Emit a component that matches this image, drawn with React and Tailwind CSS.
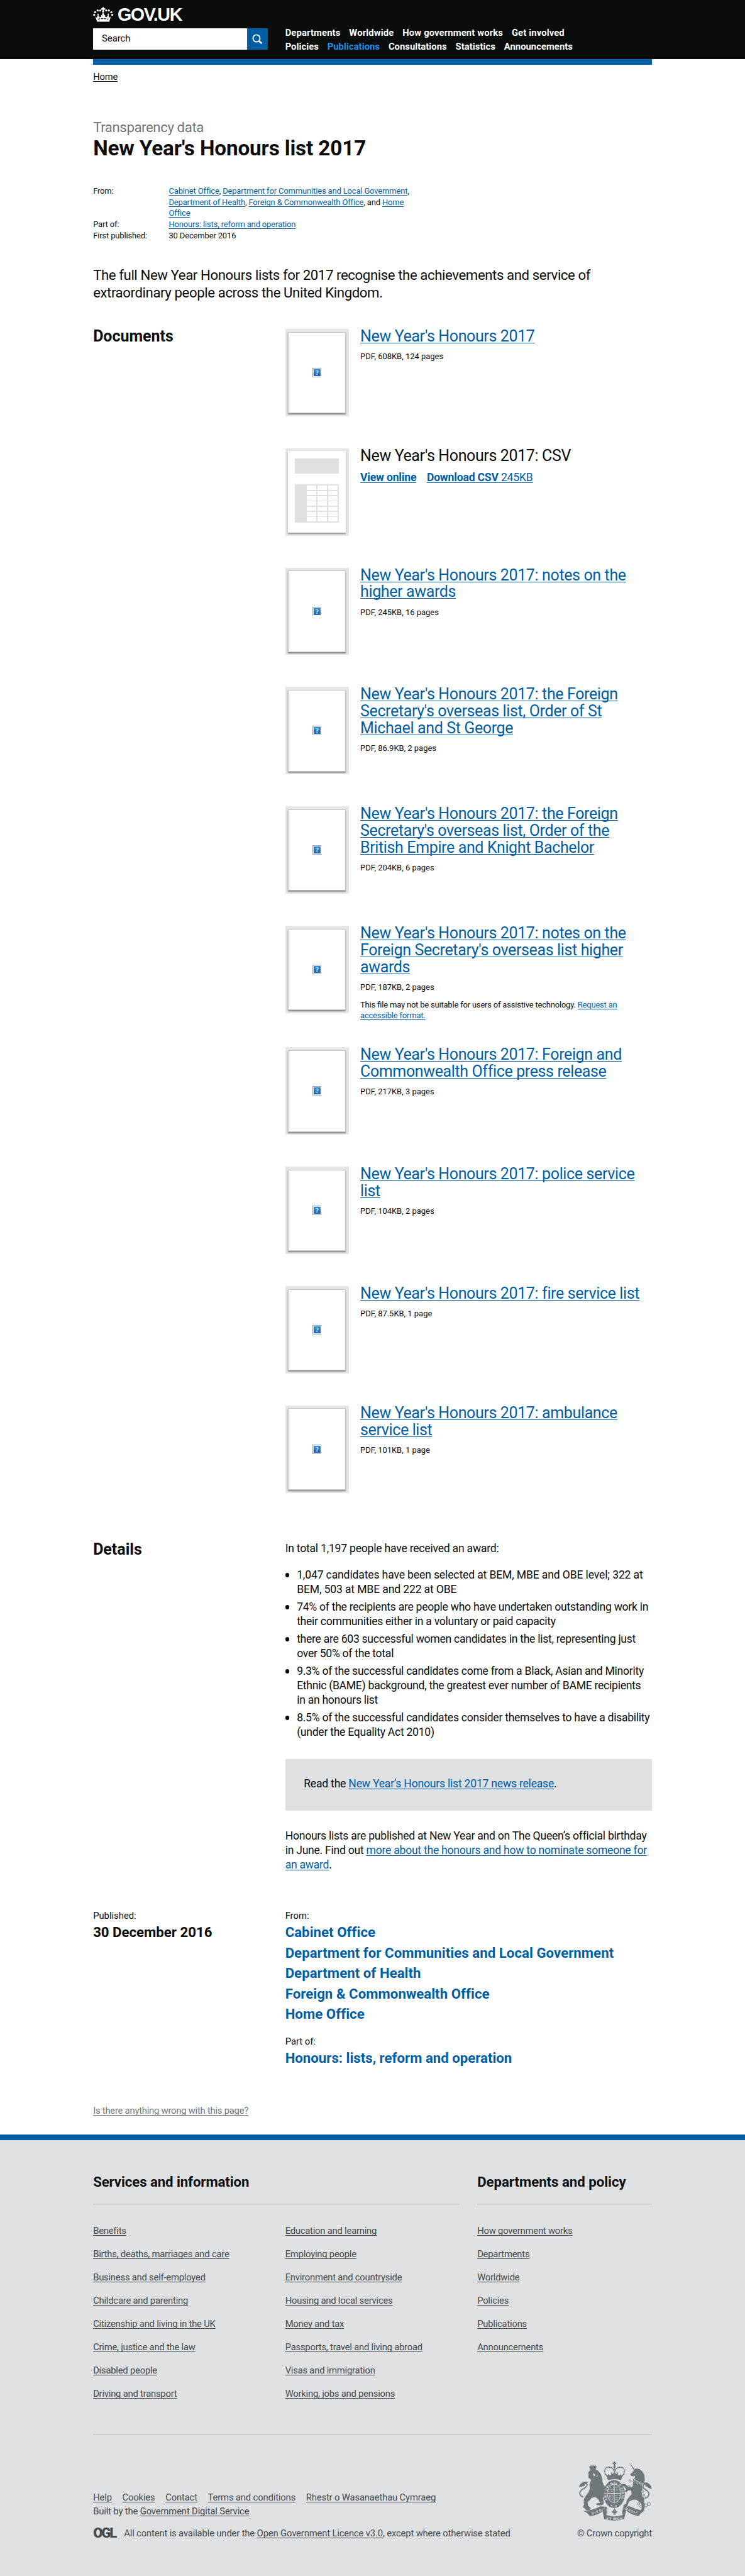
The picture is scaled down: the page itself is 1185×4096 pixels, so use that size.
const documents = [
  { title: ["New Year's Honours 2017"], meta: "PDF, 608KB, 124 pages" },
  { title: ["New Year's Honours 2017: CSV"], csv: true },
  { title: ["New Year's Honours 2017: notes on the", "higher awards"], meta: "PDF, 245KB, 16 pages" },
  {
    title: ["New Year's Honours 2017: the Foreign", "Secretary's overseas list, Order of St", "Michael and St George"],
    meta: "PDF, 86.9KB, 2 pages",
  },
  {
    title: ["New Year's Honours 2017: the Foreign", "Secretary's overseas list, Order of the", "British Empire and Knight Bachelor"],
    meta: "PDF, 204KB, 6 pages",
  },
  {
    title: ["New Year's Honours 2017: notes on the", "Foreign Secretary's overseas list higher", "awards"],
    meta: "PDF, 187KB, 2 pages",
    note: true,
  },
  { title: ["New Year's Honours 2017: Foreign and", "Commonwealth Office press release"], meta: "PDF, 217KB, 3 pages" },
  { title: ["New Year's Honours 2017: police service", "list"], meta: "PDF, 104KB, 2 pages" },
  { title: ["New Year's Honours 2017: fire service list"], meta: "PDF, 87.5KB, 1 page" },
  { title: ["New Year's Honours 2017: ambulance", "service list"], meta: "PDF, 101KB, 1 page" },
];

const facts = [
  ["1,047 candidates have been selected at BEM, MBE and OBE level; 322 at", "BEM, 503 at MBE and 222 at OBE"],
  ["74% of the recipients are people who have undertaken outstanding work in", "their communities either in a voluntary or paid capacity"],
  ["there are 603 successful women candidates in the list, representing just", "over 50% of the total"],
  ["9.3% of the successful candidates come from a Black, Asian and Minority", "Ethnic (BAME) background, the greatest ever number of BAME recipients", "in an honours list"],
  ["8.5% of the successful candidates consider themselves to have a disability", "(under the Equality Act 2010)"],
];

const organisations = [
  "Cabinet Office",
  "Department for Communities and Local Government",
  "Department of Health",
  "Foreign & Commonwealth Office",
  "Home Office",
];

const serviceLinks = [
  ["Benefits", "Births, deaths, marriages and care", "Business and self-employed", "Childcare and parenting", "Citizenship and living in the UK", "Crime, justice and the law", "Disabled people", "Driving and transport"],
  ["Education and learning", "Employing people", "Environment and countryside", "Housing and local services", "Money and tax", "Passports, travel and living abroad", "Visas and immigration", "Working, jobs and pensions"],
];
const policyLinks = ["How government works", "Departments", "Worldwide", "Policies", "Publications", "Announcements"];

function Link({ children, className = "text-[#005ea5]" }) {
  return (
    <a href="#" className={`underline decoration-1 underline-offset-[2px] [text-decoration-skip-ink:none] ${className}`}>
      {children}
    </a>
  );
}

function Lines({ lines }) {
  return lines.map((line) => (
    <span key={line} className="block whitespace-nowrap">
      {line}
    </span>
  ));
}

function Crown() {
  return (
    <svg viewBox="0 0 107 78" className="h-[26px] w-[35px]" fill="#fff">
      <path d="M50 0h7v6h7v8h-7v8h-7v-8h-7V6h7z" />
      <circle cx="53" cy="24" r="5.5" />
      <circle cx="38" cy="18" r="5.5" />
      <circle cx="24" cy="18" r="5.5" />
      <circle cx="11" cy="27" r="5.5" />
      <circle cx="6" cy="41" r="5.5" />
      <circle cx="69" cy="18" r="5.5" />
      <circle cx="83" cy="18" r="5.5" />
      <circle cx="96" cy="27" r="5.5" />
      <circle cx="101" cy="41" r="5.5" />
      <path d="M12 50l8 6 5-15-4-4 5-3 5 3-3 5 6 12 10-4-3-6 5-3 4 6h6l4-6 5 3-3 6 10 4 6-12-3-5 5-3 5 3-4 4 5 15 8-6-7 20-1 7H21l-2-7z" />
      <circle cx="53" cy="38" r="6" />
      <path d="M50 40h7l2 13H48z" />
      <path d="M26 64q27-7 54 0" fill="none" stroke="#0b0c0c" strokeWidth="4" strokeDasharray="11 5" />
    </svg>
  );
}

function MissingImage() {
  return (
    <svg viewBox="0 0 16 16" className="size-4">
      <defs>
        <linearGradient id="missing" x1="0" y1="0" x2="0" y2="1">
          <stop offset="0" stopColor="#3190d0" />
          <stop offset="1" stopColor="#1f66ae" />
        </linearGradient>
      </defs>
      <rect x=".5" y=".5" width="15" height="15" fill="#fff" stroke="#7f9fcb" />
      <rect x="2" y="2" width="12" height="12" fill="url(#missing)" />
      <text x="8" y="12" textAnchor="middle" fontSize="11.5" fontWeight="700" fontFamily="Liberation Serif, serif" fill="#e3effa">
        ?
      </text>
    </svg>
  );
}

function Thumbnail({ csv }) {
  return (
    <div className="mt-px h-[150px] w-[109px] shrink-0 bg-[#e6e6e6] p-[5px]">
      {csv ? (
        <div className="flex h-[140px] w-[99px] flex-col bg-white px-3 pt-3 shadow-[0_2px_2px_rgba(0,0,0,0.4)]">
          <div className="h-[27px] bg-[#dee0e2]" />
          <div className="mt-[18px] grid h-[66px] grid-cols-3 grid-rows-7 gap-[2px] bg-[#dee0e2] py-[2.5px] pr-[2px] pl-5">
            {Array.from({ length: 21 }, (_, i) => (
              <div key={i} className="bg-white" />
            ))}
          </div>
        </div>
      ) : (
        <div className="flex h-[140px] w-[99px] items-center justify-center border border-[#c3c3c3] bg-white shadow-[0_2px_2px_rgba(0,0,0,0.4)]">
          <MissingImage />
        </div>
      )}
    </div>
  );
}

function DocumentRow({ title, meta, csv, note }) {
  return (
    <li className={`flex gap-5 ${note ? "h-[209px]" : "h-[205px]"}`}>
      <Thumbnail csv={csv} />
      <div>
        <h3 className="text-[27px] leading-[29px] tracking-[-0.0145em]">
          {csv ? <Lines lines={title} /> : <Link><Lines lines={title} /></Link>}
        </h3>
        {csv ? (
          <p className="mt-[10px] flex gap-[18px] text-[19px] leading-[25px] tracking-[-0.011em]">
            <Link className="font-bold text-[#005ea5]">View online</Link>
            <Link>
              <strong className="font-bold">Download CSV</strong> 245KB
            </Link>
          </p>
        ) : (
          <p className="mt-[10px] text-[14px] leading-5">{meta}</p>
        )}
        {note && (
          <p className="mt-[10px] text-[14px] leading-[19px] tracking-[-0.014em]">
            This file may not be suitable for users of assistive technology. <Link>Request an</Link>
            <br />
            <Link>accessible format.</Link>
          </p>
        )}
      </div>
    </li>
  );
}

function FooterLinks({ items, className }) {
  return (
    <ul className={`flex flex-col gap-5 leading-5 ${className}`}>
      {items.map((item) => (
        <li key={item}>
          <Link className="text-[#454a4c]">{item}</Link>
        </li>
      ))}
    </ul>
  );
}

function CoatOfArms() {
  return (
    <svg viewBox="45 57 375 306" className="h-[102px] w-[125px]" fill="#6f777b">
      {/* lion */}
      <path d="M97 78l5 6 4-9 7 7 4-11 5 10 7-7 2 9 5-5-5 21H102z" />
      <path d="M103 101l33-2 10 8 12 16 6 20 2 20 6 14 10 14-3 20-8 20-2 14 4 24-6 12-14 2-16-2-6-6 12-4 10-2-8-16-16-14-20 6-6 8-14 14 2 16 14 14-2 8-14 4-10-4-6-8-6-2-2-8 6-6-2-16 2-16 8-14 14-18 8-20-2-22 8-22-4-8-8-2-2-8 2-12-4-8z" />
      <path d="M66 240c-20-8-22-24-8-36 14-10 30-16 28-28-4-14-20-4-14 8" fill="none" stroke="#6f777b" strokeWidth="6" />
      <path d="M92 164c-14-6-26-4-34 4-8 6-14 14-12 22 6-4 16-2 22-8 8-6 14-10 24-18z" />
      <path d="M118 116l12 10-4 6-8-4zM140 124l-6 12 6-4z" fill="#dee0e2" />
      {/* crown */}
      <path d="M224 57h7v6h6v7h-6v8h-7v-8h-6v-7h6z" />
      <circle cx="228" cy="82" r="6" />
      <g fill="none" stroke="#6f777b" strokeWidth="6" strokeDasharray="6 2">
        <path d="M195 138c-28-24-22-52 4-52 16 0 24 10 27 22" />
        <path d="M261 138c28-24 22-52-4-52-16 0-24 10-27 22" />
        <path d="M228 86v34" />
      </g>
      <path d="M186 132l12-10 6 8 8-8-4-8h10l-2 9 12-10 12 10-2-9h10l-4 8 8 8 6-8 12 10-8 12H194z" />
      <path d="M190 139q38-12 76 0l-4 14q-34-10-68 0z" />
      {/* garter and shield */}
      <ellipse cx="226" cy="225" rx="55" ry="72" />
      <ellipse cx="226" cy="221" rx="37" ry="49" fill="#dee0e2" />
      <ellipse cx="226" cy="221" rx="34" ry="46" />
      <path d="M226 174v94M191 221h70" stroke="#dee0e2" strokeWidth="4" />
      <g stroke="#dee0e2" strokeWidth="3" strokeDasharray="7 4 3 3">
        <path d="M203 190h19M198 200h24M195 210h27M232 234h26M232 244h24M232 254h18M232 190h18M232 203h24" />
        <path d="M201 230v22M209 230v28M217 230v32" />
      </g>
      <path id="garter" d="M192 254A40 54 0 1 1 260 254" fill="none" />
      <text fontSize="15" fontWeight="700" fontFamily="Roboto, sans-serif" fill="#dee0e2">
        <textPath href="#garter" textLength="200">SOIT QUI MAL Y PENSE</textPath>
      </text>
      <circle cx="213" cy="284" r="4" fill="#dee0e2" />
      <circle cx="236" cy="286" r="4" fill="#dee0e2" />
      {/* unicorn */}
      <path d="M303 63l29 33-5 5zM326 105l8-10 8-2 16 4 14 12 10 18 2 24-4 18-12 2-38-24 4-16-10 2-10-2-6-8 10-8z" />
      <path d="M322 146l46 28 4 24-4 18 2 20 12 10-2 18 4 14-2 24-8 14-16 2-8-4 16-10 4-18-10-18-20-14-18 0-20 10-8 24-12 4-10-4 4-8 12-6 2-16 14-20 12-12-2-18-12-4-14 12-8-6 8-10-10-14-14-4 4-10 16 2 12 12 22 2 6-10z" />
      <path d="M320 150q20 22 46 22" fill="none" stroke="#dee0e2" strokeWidth="5" strokeDasharray="4 4" />
      <path d="M384 246c24-8 28-26 12-38-14-10-26-16-20-30 8-10 18-2 14 8" fill="none" stroke="#6f777b" strokeWidth="6" />
      <path d="M378 166c14-4 26 0 32 10 6 6 10 12 8 22-8-2-14-4-20-10-6-6-12-12-20-22z" />
      <circle cx="333" cy="117" r="2.5" fill="#dee0e2" />
      <g fill="none" stroke="#6f777b" strokeWidth="3">
        <circle cx="372" cy="211" r="6" fill="#dee0e2" />
        <circle cx="379" cy="231" r="5" fill="#dee0e2" />
        <circle cx="308" cy="157" r="6" />
        <circle cx="302" cy="186" r="6" />
        <circle cx="352" cy="275" r="6" />
        <circle cx="363" cy="289" r="5" />
        <circle cx="389" cy="283" r="8" />
        <circle cx="405" cy="276" r="8" />
      </g>
      {/* motto ribbon */}
      <path d="M66 312q50-2 88-24l34 2 6 22-14 8-10-8q-34 24-70 26-12-20-34-26z" />
      <path d="M386 310q-42-2-78-22l-34 2-8 22 14 8 12-8q30 24 62 26 10-20 32-28z" />
      <path d="M164 306q10-12 22-2 8 16 0 28 42 14 84 0-8-12 0-28 12-10 20 2l-12 48q-50 16-104 0z" fill="#6f777b" stroke="#dee0e2" strokeWidth="2" />
      <path d="M190 296h76v34q-38 12-76 0z" fill="#dee0e2" />
      <path d="M228 297l7 12-4 8c4-10 14-6 10 2-2 4-6 4-8 2v10h-10v-10c-2 2-6 2-8-2-4-8 6-12 10-2l-4-8z" />
      <g fontFamily="Roboto, sans-serif" fontWeight="700" fill="#dee0e2" fontSize="19">
        <text x="228" y="358" textAnchor="middle" textLength="84">ET MON</text>
        <text transform="translate(113 332) rotate(-22)" fontSize="17" textLength="52">DIEU</text>
        <text transform="translate(283 305) rotate(24)" fontSize="17" textLength="64">DROIT</text>
      </g>
    </svg>
  );
}

function Header() {
  const item = "whitespace-nowrap";
  return (
    <header className="h-[101px] bg-[#0b0c0c]">
      <div className="mx-auto flex w-[960px] text-white">
        <div className="w-[330px]">
          <div className="flex h-[49px] items-start gap-[7px] pt-3">
            <Crown />
            <span className="mt-[-1px] font-['Liberation_Sans',sans-serif] text-[31px] leading-[30px] font-bold tracking-[-0.05em]">GOV.UK</span>
          </div>
          <div className="flex h-9 w-[300px] gap-px">
            <div className="flex flex-1 items-center bg-white pb-px pl-[15px] text-[16px] text-[#0b0c0c]">Search</div>
            <div className="flex w-[35px] items-center justify-center bg-[#005ea5]">
              <svg viewBox="0 0 18 18" className="size-[18px]" fill="none" stroke="#fff">
                <circle cx="7.5" cy="7.5" r="6" strokeWidth="2" />
                <path d="M11.8 11.8l4.7 4.7" strokeWidth="3" />
              </svg>
            </div>
          </div>
        </div>
        <nav className="flex flex-col pt-11 text-[16px] leading-6 font-bold">
          <div className="flex gap-[15px] tracking-[0.009em]">
            <span className={item}>Departments</span>
            <span className={item}>Worldwide</span>
            <span className={item}>How government works</span>
            <span className={item}>Get involved</span>
          </div>
          <div className="flex gap-[15px] tracking-[0.003em]">
            <span className={item}>Policies</span>
            <span className="text-[#1d8feb]">Publications</span>
            <span className={item}>Consultations</span>
            <span className={item}>Statistics</span>
            <span className={item}>Announcements</span>
          </div>
        </nav>
      </div>
    </header>
  );
}

function Footer() {
  return (
    <footer className="mt-[30px] border-t-[10px] border-[#005ea5] bg-[#dee0e2] tracking-[-0.0146em] text-[#454a4c]">
      <div className="mx-auto w-[960px] pt-[58px] pb-[61px]">
        <div className="flex gap-[30px]">
          <section className="w-[630px]">
            <h2 className="border-b border-[#bfc1c3] pb-[22px] text-[24px] leading-[30px] font-bold tracking-[-0.004em] text-[#0b0c0c]">Services and information</h2>
            <div className="mt-[35px] flex">
              <FooterLinks items={serviceLinks[0]} className="w-[330px]" />
              <FooterLinks items={serviceLinks[1]} className="w-[300px]" />
            </div>
          </section>
          <section className="w-[300px]">
            <h2 className="border-b border-[#bfc1c3] pb-[22px] text-[24px] leading-[30px] font-bold tracking-[-0.001em] text-[#0b0c0c]">Departments and policy</h2>
            <FooterLinks items={policyLinks} className="mt-[35px]" />
          </section>
        </div>
        <div className="mt-[60px] flex justify-between border-t border-[#bfc1c3] pt-[45px]">
          <div className="pt-[50px] leading-6 tracking-[-0.01em]">
            <div className="flex gap-[18px]">
              {["Help", "Cookies", "Contact", "Terms and conditions", "Rhestr o Wasanaethau Cymraeg"].map((t) => (
                <Link key={t} className="text-[#454a4c]">{t}</Link>
              ))}
            </div>
            <p>
              Built by the <Link className="text-[#454a4c]">Government Digital Service</Link>
            </p>
            <div className="mt-[16px] flex leading-5">
              <span className="w-[53px] text-[24px] leading-[18px] font-black tracking-[-0.1em]">OGL</span>
              <p>
                All content is available under the <Link className="text-[#454a4c]">Open Government Licence v3.0</Link>, except where otherwise stated
              </p>
            </div>
          </div>
          <div className="flex flex-col items-end">
            <CoatOfArms />
            <p className="mt-[12px] leading-5">© Crown copyright</p>
          </div>
        </div>
      </div>
    </footer>
  );
}

export default function App() {
  return (
    <div className="min-h-screen bg-[#dee0e2]">
      <div className="w-[1280px] overflow-hidden bg-white font-[Roboto,sans-serif] text-[16px] font-[450] text-[#0b0c0c] [zoom:0.92578]">
        <Header />
        <main className="mx-auto w-[960px]">
          <div className="h-[10px] bg-[#005ea5]" />
          <nav className="mt-[11px] leading-[21px] tracking-[-0.0146em]">
            <Link className="text-[#0b0c0c]">Home</Link>
          </nav>

          <p className="mt-[61px] text-[24px] leading-[30px] tracking-[-0.0186em] text-[#6f777b]">Transparency data</p>
          <h1 className="text-[36px] leading-[40px] font-bold tracking-[-0.0045em]">New Year's Honours list 2017</h1>

          <dl className="mt-[45px] grid grid-cols-[130px_1fr] text-[14px] leading-[19px] tracking-[-0.0106em]">
            <dt>From:</dt>
            <dd>
              <Link>Cabinet Office</Link>, <Link>Department for Communities and Local Government</Link>,<br />
              <Link>Department of Health</Link>, <Link>Foreign &amp; Commonwealth Office</Link>, and <Link>Home</Link>
              <br />
              <Link>Office</Link>
            </dd>
            <dt>Part of:</dt>
            <dd>
              <Link>Honours: lists, reform and operation</Link>
            </dd>
            <dt>First published:</dt>
            <dd>30 December 2016</dd>
          </dl>

          <p className="mt-[44px] text-[24px] leading-[30px] tracking-[-0.0185em]">
            The full New Year Honours lists for 2017 recognise the achievements and service of
            <br />
            extraordinary people across the United Kingdom.
          </p>

          <section className="mt-[46px] flex">
            <h2 className="w-[330px] text-[27px] leading-[29px] font-bold">Documents</h2>
            <ul>
              {documents.map((doc) => (
                <DocumentRow key={doc.title.join()} {...doc} />
              ))}
            </ul>
          </section>

          <section className="mt-[30px] flex">
            <h2 className="w-[330px] text-[27px] leading-[29px] font-bold">Details</h2>
            <div className="w-[630px] text-[19px] leading-[25px] tracking-[-0.0125em]">
              <p>In total 1,197 people have received an award:</p>
              <ul className="mt-5 flex flex-col gap-[5px]">
                {facts.map((lines) => (
                  <li key={lines[0]} className="flex items-start">
                    <span className="mt-[9px] mr-[13px] size-[7px] shrink-0 rounded-full bg-[#0b0c0c]" />
                    <p className={lines[0].startsWith("1,047") ? "tracking-[-0.0083em]" : "tracking-[-0.0155em]"}>
                      <Lines lines={lines} />
                    </p>
                  </li>
                ))}
              </ul>
              <div className="mt-[33px] h-[89px] bg-[#dee0e2] pt-[31px] pl-8">
                Read the <Link>New Year’s Honours list 2017 news release</Link>.
              </div>
              <p className="mt-[31px] tracking-[-0.0145em]">
                Honours lists are published at New Year and on The Queen’s official birthday
                <br />
                in June. Find out <Link>more about the honours and how to nominate someone for</Link>
                <br />
                <Link>an award</Link>.
              </p>
            </div>
          </section>

          <section className="mt-[65px] flex">
            <div className="w-[330px]">
              <p className="leading-5">Published:</p>
              <p className="mt-[4px] text-[24px] leading-[30px] font-bold">30 December 2016</p>
            </div>
            <div>
              <p className="leading-5">From:</p>
              <ul className="mt-[4px] flex flex-col gap-[5px] text-[24px] leading-[30px] font-bold tracking-[0.002em] text-[#005ea5]">
                {organisations.map((name) => (
                  <li key={name}>{name}</li>
                ))}
              </ul>
              <p className="mt-[22px] leading-5">Part of:</p>
              <p className="mt-[4px] text-[24px] leading-[30px] font-bold text-[#005ea5]">Honours: lists, reform and operation</p>
            </div>
          </section>

          <p className="mt-[65px] leading-5 tracking-[-0.0155em]">
            <Link className="text-[#6f777b]">Is there anything wrong with this page?</Link>
          </p>
        </main>
        <Footer />
      </div>
    </div>
  );
}
